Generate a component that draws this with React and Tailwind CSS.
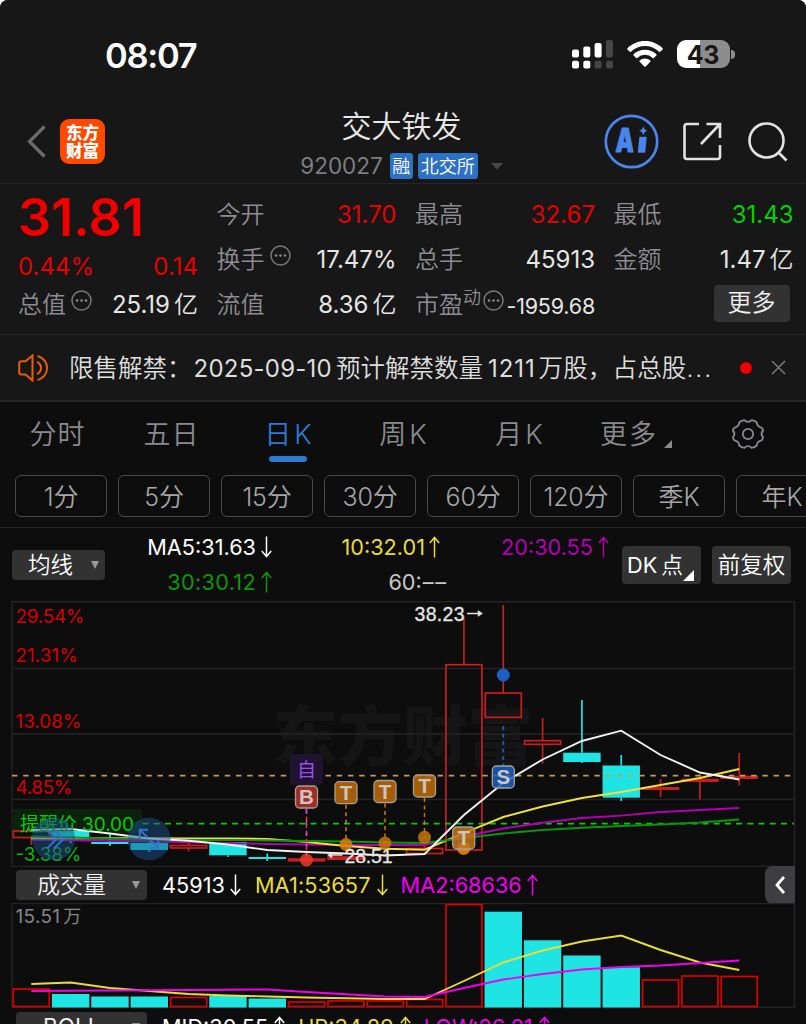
import React from "react";

const X0 = 31.3;
const STEP = 39.33;
const cx = (i) => X0 + STEP * i;

const RED = "#c81e1e";
const CYAN = "#1fe4e4";

// [top, bottom, high, low, color, hollow]
const candles = [
  [831, 837.5, 831, 845, RED, true],
  [831, 837, 831, 843, CYAN, false],
  [842, 844, 834, 846, CYAN, false],
  [843, 850, 841, 852, CYAN, false],
  [845.5, 848, 843, 851.5, RED, true],
  [842, 855.3, 842, 857, CYAN, false],
  [857, 859, 853.5, 861, CYAN, false],
  [858.2, 861.6, 858, 862, RED, false],
  [856.2, 860, 856, 860, RED, false],
  [854, 856, 853, 857, RED, false],
  [848.5, 853.5, 846, 854, RED, true],
  [664.7, 850, 617, 850, RED, true],
  [693, 717.3, 605, 717, RED, true],
  [740.7, 744.3, 718, 763.5, RED, true],
  [752.7, 762, 700, 763, CYAN, false],
  [765.5, 797.7, 755, 801, CYAN, false],
  [787, 790, 779, 797, RED, false],
  [778.7, 782, 774, 799.5, RED, false],
  [775.7, 779, 753, 785.5, RED, false],
];

const priceLines = [
  { color: "#b400b4", ys: [839.8, 840.2, 840.8, 841.4, 842.2, 843, 844, 844.5, 845, 845, 845, 836.5, 828.5, 822.7, 818, 815.6, 812, 810, 808] },
  { color: "#f0e040", ys: [838.3, 838.3, 838.3, 838.3, 838.4, 838.5, 838.9, 842, 846, 848.7, 849.7, 833, 817, 806.5, 798, 792, 785, 778, 769] },
  { color: "#0a960a", ys: [836.5, 837.5, 838.5, 839.5, 840, 840, 840.5, 841, 841.5, 842.5, 843, 838, 833.5, 830, 827.8, 826, 824.5, 822.5, 819.5] },
  { color: "#f2f2f2", ys: [830, 829, 833.5, 838.5, 840.7, 844.5, 850, 852, 853.5, 855.5, 854, 815, 783, 759.5, 741, 730.7, 755, 772.5, 779.5] },
];

// [top, up]
const volumes = [
  [989, true], [994, false], [996.5, false], [996.5, false], [997.5, true], [996, false], [998.5, false],
  [1002, true], [1001, true], [1001, true], [999.5, true], [904.5, true], [911.7, false], [940.3, false],
  [955.5, false], [967.3, false], [980, true], [976, true], [976.5, true],
];

const volumeLines = [
  { color: "#e8dc3c", ys: [984, 982.5, 988, 991, 994, 995.5, 996.5, 997.5, 998.3, 999, 999, 981, 962.5, 950.5, 941.5, 935.5, 950, 962.5, 970] },
  { color: "#f000f0", ys: [991, 990.7, 990.5, 990.3, 990, 989.7, 989.5, 992, 994.3, 996.5, 997, 988, 979.5, 974, 969.5, 967, 965.5, 963, 960.5] },
];

const points = (ys) => ys.map((y, i) => `${cx(i)},${y}`).join(" ");

const trades = [
  { x: 306.5, y: 797, dot: 860, label: "B", fill: "#bc322c", dotFill: "#ec3a26" },
  { x: 346, y: 792.7, dot: 844.5, label: "T", fill: "#c06c08", dotFill: "#d97e0c" },
  { x: 385, y: 791.5, dot: 843, label: "T", fill: "#c06c08", dotFill: "#c8760c" },
  { x: 424.5, y: 786, dot: 837.3, label: "T", fill: "#c06c08", dotFill: "#c8760c" },
  { x: 463.7, y: 838, dot: 848.5, label: "T", fill: "#c5761a", dotFill: "#f08c10" },
];

const BarIcon = () => (
  <svg width="41" height="29" viewBox="0 0 41 29">
    <rect x="0" y="9.5" width="7" height="8" rx="2" fill="#fff" />
    <rect x="11.3" y="6.5" width="7" height="11" rx="2" fill="#fff" />
    <rect x="22.6" y="3" width="7" height="14.5" rx="2" fill="#fff" />
    <rect x="34" y="0" width="7" height="17.5" rx="2" fill="#464646" />
    <rect x="0" y="20.7" width="7" height="7.8" rx="2" fill="#fff" />
    <rect x="11.3" y="20.7" width="7" height="7.8" rx="2" fill="#fff" />
    <rect x="22.6" y="20.7" width="7" height="7.8" rx="2" fill="#464646" />
    <rect x="34" y="20.7" width="7" height="7.8" rx="2" fill="#464646" />
  </svg>
);

const WifiIcon = () => (
  <svg width="36" height="27" viewBox="0 0 36 27" fill="#fff" className="mt-px">
    <path d="M18 0C24.8 0 31 2.7 35.6 7.2Q36.1 7.8 35.6 8.4L33.2 10.7Q32.6 11.2 32 10.7A20.3 20.3 0 0 0 4 10.7Q3.4 11.2 2.8 10.7L.4 8.4Q-.1 7.8 .4 7.2C5 2.7 11.2 0 18 0Z" />
    <path d="M18 8.8C22.4 8.8 26.4 10.5 29.4 13.3Q30 13.9 29.4 14.5L26.9 16.9Q26.3 17.4 25.7 16.9A11.3 11.3 0 0 0 10.3 16.9Q9.7 17.4 9.1 16.9L6.6 14.5Q6 13.9 6.6 13.3C9.6 10.5 13.6 8.8 18 8.8Z" />
    <path d="M18 17.5C20 17.5 21.9 18.2 23.3 19.5Q23.9 20.1 23.3 20.7L18.7 25.4Q18 26 17.3 25.4L12.7 20.7Q12.1 20.1 12.7 19.5C14.1 18.2 16 17.5 18 17.5Z" />
  </svg>
);

const Dots = () => (
  <svg width="21" height="21" viewBox="0 0 21 21" className="shrink-0">
    <circle cx="10.5" cy="10.5" r="9.5" fill="none" stroke="#77777b" strokeWidth="1.5" />
    <circle cx="6" cy="10.5" r="1.3" fill="#8a8a8e" />
    <circle cx="10.5" cy="10.5" r="1.3" fill="#8a8a8e" />
    <circle cx="15" cy="10.5" r="1.3" fill="#8a8a8e" />
  </svg>
);

const Arrow = ({ down }) => (
  <svg width="11" height="22" viewBox="0 0 11 22" fill="none" stroke="currentColor" strokeWidth="1.5" className={down ? "rotate-180" : ""}>
    <path d="M5.5 21.5V1.5M0.8 7L5.5 1.5L10.2 7" />
  </svg>
);

const StatusBar = () => (
  <div className="flex h-[104px] items-start justify-between pl-[105px] pr-[71px] pt-[40px]">
    <span className="pt-px text-[34.5px] font-semibold leading-[30px] tracking-[-1.3px] text-white">08:07</span>
    <div className="flex items-start gap-[14px]">
      <BarIcon />
      <WifiIcon />
      <div className="flex items-center">
        <div className="flex h-[28px] w-[53px] items-center justify-center rounded-[9px] bg-[linear-gradient(90deg,#fff_43%,#8d8d8d_43%)] pt-[2px] text-[25px] font-bold leading-none tracking-[-0.3px] text-[#171717]">
          43
        </div>
        <div className="ml-[1.5px] h-[9px] w-[4px] rounded-r-full bg-[#8d8d8d]" />
      </div>
    </div>
  </div>
);

const Header = () => (
  <div className="flex h-[80px] items-start border-b-[1.5px] border-[#262628]">
    <div className="flex w-[230px] items-center pl-[27px] pt-[15px]">
      <svg width="19" height="33" viewBox="0 0 19 33" fill="none" stroke="#6c6c6e" strokeWidth="3.2">
        <path d="M17.5 1.5L2.5 16.5L17.5 31.5" />
      </svg>
      <div className="ml-[14px] flex h-[45px] w-[45px] flex-col items-center justify-center rounded-[9px] bg-[#ff4800] text-[16.5px] font-black leading-[18px] text-white">
        <span>东方</span>
        <span>财富</span>
      </div>
    </div>
    <div className="flex w-[343px] flex-col items-center pt-[2px]">
      <div className="h-[42px] text-[30px] font-[350] leading-[40px] text-[#e8e8e8]">交大铁发</div>
      <div className="flex items-center pt-[5px]">
        <span className="text-[22.5px] leading-[26px] text-[#7d7d82]">920027</span>
        <span className="ml-[7px] flex h-[26px] w-[23px] items-center justify-center rounded-[3px] bg-[#2d71c4] text-[18px] font-[350] text-white">融</span>
        <span className="ml-[5px] flex h-[26px] w-[60px] items-center justify-center rounded-[3px] bg-[#2d71c4] text-[18px] font-[350] text-white">北交所</span>
        <svg width="12" height="7" viewBox="0 0 12 7" className="ml-[13px]">
          <path d="M0 0H12L6 6.5Z" fill="#48484a" />
        </svg>
      </div>
    </div>
    <div className="flex flex-1 items-center pl-[31px] pt-[10px]">
      <svg width="55" height="55" viewBox="0 0 55 55">
        <circle cx="27.5" cy="27.5" r="25.7" fill="none" stroke="#4a86ee" strokeWidth="2.7" />
        <text x="12.5" y="38.3" fontSize="33" fontWeight="900" fill="#4a86ee" stroke="#4a86ee" strokeWidth="0.9" strokeLinejoin="round" transform="skewX(-2)" textLength="18.5" lengthAdjust="spacingAndGlyphs">A</text>
        <path d="M36 23.5H42L40.5 38H34.5Z" fill="#4a86ee" stroke="#4a86ee" strokeWidth="1.4" strokeLinejoin="round" />
        <path d="M39.3 12.3Q40.2 15.9 43.7 16.8Q40.2 17.7 39.3 21.3Q38.4 17.7 34.9 16.8Q38.4 15.9 39.3 12.3Z" fill="#4a86ee" />
      </svg>
      <svg width="39" height="39" viewBox="0 0 39 39" fill="none" stroke="#e2e2e2" strokeWidth="2.6" className="ml-[24px]">
        <path d="M16 2H4Q1.5 2 1.5 4.5V34.5Q1.5 37 4 37H34.5Q37 37 37 34.5V23" />
        <path d="M23.5 2H37V16M36.5 2.5L18 22" />
      </svg>
      <svg width="40" height="40" viewBox="0 0 40 40" fill="none" stroke="#e2e2e2" strokeWidth="2.6" className="ml-[26px]">
        <circle cx="18.5" cy="18.5" r="17" />
        <path d="M30 30L38.5 38.5" />
      </svg>
    </div>
  </div>
);

const Stat = ({ label, value, color = "text-[#e6e6e6]", dots, unit }) => (
  <div className="flex h-[45px] items-center justify-between">
    <span className="flex items-center text-[24px] font-[350] text-[#8c8c92]">
      {label}
      {dots && <span className="mb-[9px] ml-[5px]"><Dots /></span>}
    </span>
    <span className={`text-[24px] ${color}`}>
      {value}
      {unit && <span className="ml-1 font-[350]">{unit}</span>}
    </span>
  </div>
);

const Quote = () => (
  <div className="grid h-[151px] grid-cols-4 gap-x-[18.5px] border-b-[1.5px] border-[#242426] pl-[18px] pr-[12.5px] pt-[8px]">
    <div>
      <div className="h-[52px] text-[52px] font-semibold leading-[51px] tracking-[0.1px] text-[#f00000]">31.81</div>
      <div className="flex h-[45px] items-center justify-between text-[24px] text-[#e60000]">
        <span>0.44%</span>
        <span>0.14</span>
      </div>
      <div className="-mt-[7px]">
        <Stat label="总值" value="25.19" unit="亿" dots />
      </div>
    </div>
    <div>
      <Stat label="今开" value="31.70" color="text-[#e60000]" />
      <Stat label="换手" value="17.47%" dots />
      <Stat label="流值" value="8.36" unit="亿" />
    </div>
    <div>
      <Stat label="最高" value="32.67" color="text-[#e60000]" />
      <Stat label="总手" value="45913" />
      <div className="flex h-[45px] items-center text-[24px] font-[350] text-[#8c8c92]">
        市盈
        <span className="mb-[15px] text-[18px]">动</span>
        <span className="mb-[9px] ml-[2px]"><Dots /></span>
        <span className="ml-auto pt-[4px] text-[21.5px] font-normal tracking-[-0.2px] text-[#e6e6e6]">-1959.68</span>
      </div>
    </div>
    <div>
      <Stat label="最低" value="31.43" color="text-[#00d200]" />
      <Stat label="金额" value="1.47" unit="亿" />
      <div className="flex h-[42px] items-center justify-end pr-[4px]">
        <span className="flex h-[37px] w-[76px] items-center justify-center rounded-[4px] bg-[#323233] text-[24px] font-[350] text-[#f0f0f0]">更多</span>
      </div>
    </div>
  </div>
);

const Notice = () => (
  <div className="flex h-[67px] items-center border-b-[2px] border-[#262628] pl-[18px] pr-[20px]">
    <svg width="33" height="28" viewBox="0 0 33 28" fill="none" stroke="#e85c10" strokeWidth="2">
      <path d="M14.5 1.5V26.5L7.5 20.5H3.5Q1.2 20.5 1.2 18.2V9.5Q1.2 7.2 3.5 7.2H7.5Z" />
      <path d="M19 8A6.5 6.5 0 0 1 19 20M19.5 2A12.3 12.3 0 0 1 19.5 26" />
    </svg>
    <div className="ml-[18px] flex w-[646px] items-center whitespace-nowrap pt-[2px] text-[24.5px] text-[#dedede]">
      <span className="font-[350]">限售解禁：</span>
      <span className="ml-[2px] text-[24px] tracking-[0.25px]">2025-09-10</span>
      <span className="ml-1 font-[350]">预计解禁数量</span>
      <span className="ml-[5px] text-[24px] tracking-[0.9px]">1211</span>
      <span className="ml-[3px] font-[350] tracking-[0.15px]">万股，占总股</span>
      <span className="font-[350] tracking-[2px]">...</span>
    </div>
    <span className="ml-[25px] h-[12px] w-[12px] rounded-full bg-[#f00000]" />
    <svg width="15" height="15" viewBox="0 0 15 15" stroke="#77777a" strokeWidth="1.6" className="ml-auto">
      <path d="M1 1L14 14M14 1L1 14" />
    </svg>
  </div>
);

const tabs = [
  { label: "分时", width: "w-[114px]", gap: "gap-px" },
  { label: "五日", width: "w-[114px]", gap: "gap-px" },
  { label: "日K", width: "w-[120px]", gap: "gap-[3px]", active: true },
  { label: "周K", width: "w-[110px]", gap: "gap-[3px]" },
  { label: "月K", width: "w-[122px]", gap: "gap-[3px]" },
];

const Tabs = () => (
  <div className="flex h-[73px] items-start text-[27px] font-[350] text-[#8a8a90]">
    {tabs.map((t) => (
      <div key={t.label} className={`flex flex-col items-center ${t.width} ${t.active ? "text-[#3079d0]" : ""}`}>
        <div className={`flex h-[54px] items-center pt-[13px] ${t.gap}`}>
          {t.label.split("").map((c) => (
            <span key={c}>{c}</span>
          ))}
        </div>
        {t.active && <span className="h-[6px] w-[38px] rounded-full bg-[#3079d0]" />}
      </div>
    ))}
    <div className="flex h-[54px] w-[112px] items-center pl-[20px] pt-[13px] tracking-[2px]">
      更多
      <svg width="8" height="8" viewBox="0 0 8 8" className="ml-[6px] mt-[17px]">
        <path d="M8 0V8H0Z" fill="#8a8a90" />
      </svg>
    </div>
    <svg width="32" height="30" viewBox="0 0 32 30" fill="none" stroke="#8a8a90" strokeWidth="1.8" strokeLinejoin="round" className="ml-[40px] mt-[17px]">
      <path d="M12.3 1.2Q16 4.6 19.7 1.2Q22.4 1.4 24.6 3.2Q25.3 8 29.6 8.6Q31.2 10.4 31 12Q28 15 31 18Q31.2 19.6 29.6 21.4Q25.3 22 24.6 26.8Q22.4 28.6 19.7 28.8Q16 25.4 12.3 28.8Q9.6 28.6 7.4 26.8Q6.7 22 2.4 21.4Q.8 19.6 1 18Q4 15 1 12Q.8 10.4 2.4 8.6Q6.7 8 7.4 3.2Q9.6 1.4 12.3 1.2Z" />
      <circle cx="16" cy="15" r="5.2" />
    </svg>
  </div>
);

const periods = ["1分", "5分", "15分", "30分", "60分", "120分", "季K", "年K"];

const Periods = () => (
  <div className="flex h-[53px] gap-[11px] overflow-hidden border-b-[1.5px] border-[#262628] pl-[15px]">
    {periods.map((p) => (
      <div key={p} className="flex h-[42px] w-[92px] shrink-0 items-center justify-center rounded-[6px] border-[1.5px] border-[#4a4a4c] pt-[3px] text-[25px] font-[350] tracking-[-0.2px] text-[#a6a6a8]">
        {p}
      </div>
    ))}
  </div>
);

const Averages = () => (
  <div className="flex h-[73px] items-start pl-[12px] text-[21.7px]">
    <div className="mt-[22px] flex h-[30px] w-[93px] items-center justify-between rounded-[4px] bg-[#323233] pl-[16px] pr-[6px] text-[22.5px] font-[350] text-white">
      均线
      <svg width="8" height="8" viewBox="0 0 8 8"><path d="M0 0H8L4 8Z" fill="#98989a" /></svg>
    </div>
    <div className="w-[167px] pt-[6px]">
      <div className="flex h-[26px] items-center justify-end gap-[5px] text-white">MA5:31.63<Arrow down /></div>
      <div className="mt-[9px] flex h-[26px] items-center justify-end gap-[5px] text-[#0c960c]"><span className="tracking-[0.3px]">30:30.12</span><Arrow /></div>
    </div>
    <div className="w-[174px] pt-[6px]">
      <div className="flex h-[26px] items-center justify-end gap-[4px] pr-[6px] text-[#e8dc3c]">10:32.01<Arrow /></div>
      <div className="mt-[9px] flex h-[26px] items-center justify-end text-[#c8c8c8]">
        60:
        <span className="ml-px tracking-[1.5px]">–</span>
        <span>–</span>
      </div>
    </div>
    <div className="flex h-[38px] w-[163px] items-center justify-end gap-[5px] text-[#b400b4]">20:30.55<Arrow /></div>
    <div className="ml-[13px] mt-[18px] flex h-[38px] w-[79px] items-center rounded-[4px] bg-[#323233] pl-[5px] text-white">
      DK<span className="ml-1 font-[350]">点</span>
      <svg width="11" height="11" viewBox="0 0 11 11" className="mt-[20px]"><path d="M11 0V11H0Z" fill="#fff" /></svg>
    </div>
    <div className="ml-[11px] mt-[18px] flex h-[38px] w-[79px] items-center justify-center rounded-[4px] bg-[#323233] text-[22.5px] font-[350] text-white">前复权</div>
  </div>
);

const Marker = ({ x, y, label, fill }) => (
  <g>
    <rect x={x - 11} y={y - 11} width="22" height="22" rx="4" fill={fill} fillOpacity="0.85" stroke="#a8a096" strokeWidth="1.3" />
    <text x={x} y={y + 7.3} fontSize="20.5" fontWeight="700" textAnchor="middle" fill="#ccc6be" className="font-['Liberation_Sans',sans-serif]">{label}</text>
  </g>
);

const PriceChart = () => (
  <svg width="806" height="266" viewBox="0 601 806 266" className="block">
    <text x="273" y="760" fontSize="65" fontWeight="900" fill="#151515" textLength="260">东方财富</text>
    <g stroke="#242426" strokeWidth="1.4" fill="none">
      <path d="M12 601.7H794.5V866.5H12Z" />
      <path d="M12 668.5H794.5M12 734H794.5M12 799.5H794.5" />
    </g>
    <path d="M12 809H139Q142.5 809 142.5 812.5V833H12Z" fill="#0b220c" />

    {candles.map(([top, bottom, high, low, color, hollow], i) => (
      <g key={i} stroke={color} strokeWidth="1.7">
        {high < top && <path d={`M${cx(i)} ${high}V${top}`} />}
        {low > bottom && <path d={`M${cx(i)} ${bottom}V${low}`} />}
        {hollow ? (
          <rect x={cx(i) - 18} y={top} width="36" height={bottom - top} fill="none" />
        ) : (
          <rect x={cx(i) - 18.7} y={top} width="37.4" height={bottom - top} fill={color} stroke="none" />
        )}
      </g>
    ))}
    <path d="M12 775.6H794" stroke="#c89860" strokeWidth="1.8" strokeDasharray="5.4 5.8" />
    <path d="M142.5 823.6H794" stroke="#0cc80c" strokeWidth="1.8" strokeDasharray="6 5.2" />

    {priceLines.map((l) => (
      <polyline key={l.color} points={points(l.ys)} fill="none" stroke={l.color} strokeWidth="1.9" />
    ))}

    <path d="M503.3 726V766" stroke="#1a5cc0" strokeWidth="1.8" strokeDasharray="4 3.5" />
    <circle cx="503.3" cy="675" r="6.5" fill="#1c60c4" />
    {trades.map((t) => (
      <g key={t.x}>
        <path d={`M${t.x} ${t.y + 12}V${t.dot}`} stroke={t.dotFill} strokeWidth="1.5" strokeDasharray="4 3.5" />
        <circle cx={t.x} cy={t.dot} r="6.5" fill={t.dotFill} fillOpacity="0.85" />
        <Marker {...t} />
      </g>
    ))}
    <path d="M306.5 809V855" stroke="#c050d8" strokeWidth="1.5" strokeDasharray="5 6" />
    <rect x="290" y="754" width="33" height="31" rx="4" fill="#1f1430" />
    <text x="306.5" y="777" fontSize="19" textAnchor="middle" fill="#9f4df0">自</text>
    <Marker x={503.3} y={777} label="S" fill="#1c60c4" />

    <g fontSize="19" fill="#d60000">
      <text x="15.5" y="622.5" textLength="69">29.54%</text>
      <text x="15.5" y="662" textLength="62.5">21.31%</text>
      <text x="15.5" y="728" textLength="66">13.08%</text>
      <text x="15.5" y="794.3" textLength="57">4.85%</text>
      <text x="15.5" y="860.7" fill="#0cb40c" textLength="66">-3.38%</text>
    </g>
    <text x="20" y="831" fontSize="19" fill="#0cc80c" textLength="114">提醒价 30.00</text>

    <g fill="#1c4f8c" fillOpacity="0.5">
      <circle cx="53.5" cy="839" r="21.5" />
      <circle cx="149" cy="839" r="21.5" />
    </g>
    <g fill="none" stroke="#2f74c8" strokeWidth="2">
      <path d="M47 829.5L56.5 839L47 848.5M54 829.5L63.5 839L54 848.5" />
      <path d="M147.5 837.5L140 830M139.8 838V829.8H148M150.5 840.5L158 848M158.3 840V848.2H150" />
    </g>

    <g fontSize="19.5" fill="#e4e4e4" stroke="#e4e4e4" strokeWidth="0.3" className="font-['Liberation_Sans',sans-serif]">
      <text x="414.5" y="620.5" textLength="50">38.23</text>
      <text x="344.5" y="862.5" textLength="48">28.51</text>
    </g>
    <g stroke="#e4e4e4" fill="#e4e4e4">
      <path d="M467 613.5H478M342.5 855H332" strokeWidth="1.5" />
      <path d="M478 610.5L482.5 613.5L478 616.5ZM332 852L327.5 855L332 858Z" strokeWidth="0.5" />
    </g>
  </svg>
);

const IndicatorButton = ({ children }) => (
  <div className="flex h-[30px] w-[131px] shrink-0 items-center rounded-[4px] bg-[#323233] pl-[21px] pr-[7px] text-[23px] font-[350] text-[#f0f0f0]">
    {children}
    <svg width="8" height="8" viewBox="0 0 8 8" className="ml-auto"><path d="M0 0H8L4 8Z" fill="#98989a" /></svg>
  </div>
);

const VolumeHeader = () => (
  <div className="flex h-[36px] items-center pl-[16px] pr-[11px] text-[21.7px]">
    <IndicatorButton>成交量</IndicatorButton>
    <span className="ml-[15px] flex items-center gap-[5px] pt-px text-white">45913<Arrow down /></span>
    <span className="ml-[14px] flex items-center gap-[6px] pt-px text-[#e8dc3c]"><span className="tracking-[0.15px]">MA1:53657</span><Arrow down /></span>
    <span className="ml-[13px] flex items-center gap-[5px] pt-px text-[#f000f0]">MA2:68636<Arrow /></span>
    <div className="ml-auto flex h-[38px] w-[30px] items-center justify-center rounded-l-[8px] bg-[#3e3e40]">
      <svg width="10" height="18" viewBox="0 0 10 18" fill="none" stroke="#fff" strokeWidth="2.8"><path d="M9 1L2 9L9 17" /></svg>
    </div>
  </div>
);

const VolumeChart = () => (
  <svg width="806" height="105" viewBox="0 903 806 105" className="block">
    <path d="M12 903.5H794.5V1007.5H12Z" fill="none" stroke="#242426" strokeWidth="1.4" />
    <text x="15.5" y="922.5" fontSize="19" fill="#85858a">
      <tspan textLength="44.5">15.51</tspan>
      <tspan dx="3" fontSize="18">万</tspan>
    </text>
    {volumes.map(([top, up], i) =>
      up ? (
        <rect key={i} x={cx(i) - 18} y={top} width="36" height={1006.5 - top} fill="none" stroke="#dc0000" strokeWidth="1.7" />
      ) : (
        <rect key={i} x={cx(i) - 18.7} y={top} width="37.4" height={1007.5 - top} fill={CYAN} />
      )
    )}
    {volumeLines.map((l) => (
      <polyline key={l.color} points={points(l.ys)} fill="none" stroke={l.color} strokeWidth="1.9" />
    ))}
  </svg>
);

const BollHeader = () => (
  <div className="flex h-[16px] items-start overflow-hidden pl-[16px] pt-[4px] text-[21.7px]">
    <IndicatorButton><span className="pl-[6px] text-[22.5px] font-normal">BOLL</span></IndicatorButton>
    <span className="ml-[15px] flex h-[30px] items-center gap-[6px] text-white">MID:30.55<Arrow /></span>
    <span className="ml-[13px] flex h-[30px] items-center gap-[6px] text-[#e8dc3c]">UP:34.89<Arrow /></span>
    <span className="ml-[13px] flex h-[30px] items-center gap-[6px] text-[#f000f0]">LOW:26.21<Arrow /></span>
  </div>
);

const App = () => {
  return (
    <div className="h-[1024px] w-[806px] overflow-hidden bg-white font-['Inter','Noto_Sans_CJK_SC',sans-serif]">
      <div className="h-full overflow-hidden rounded-t-[8px] bg-[#0d0d0d]">
        <div className="bg-[#171717]">
          <StatusBar />
          <Header />
          <Quote />
          <Notice />
        </div>
        <Tabs />
        <Periods />
        <Averages />
        <PriceChart />
        <VolumeHeader />
        <VolumeChart />
        <BollHeader />
      </div>
    </div>
  );
};

export default App;
